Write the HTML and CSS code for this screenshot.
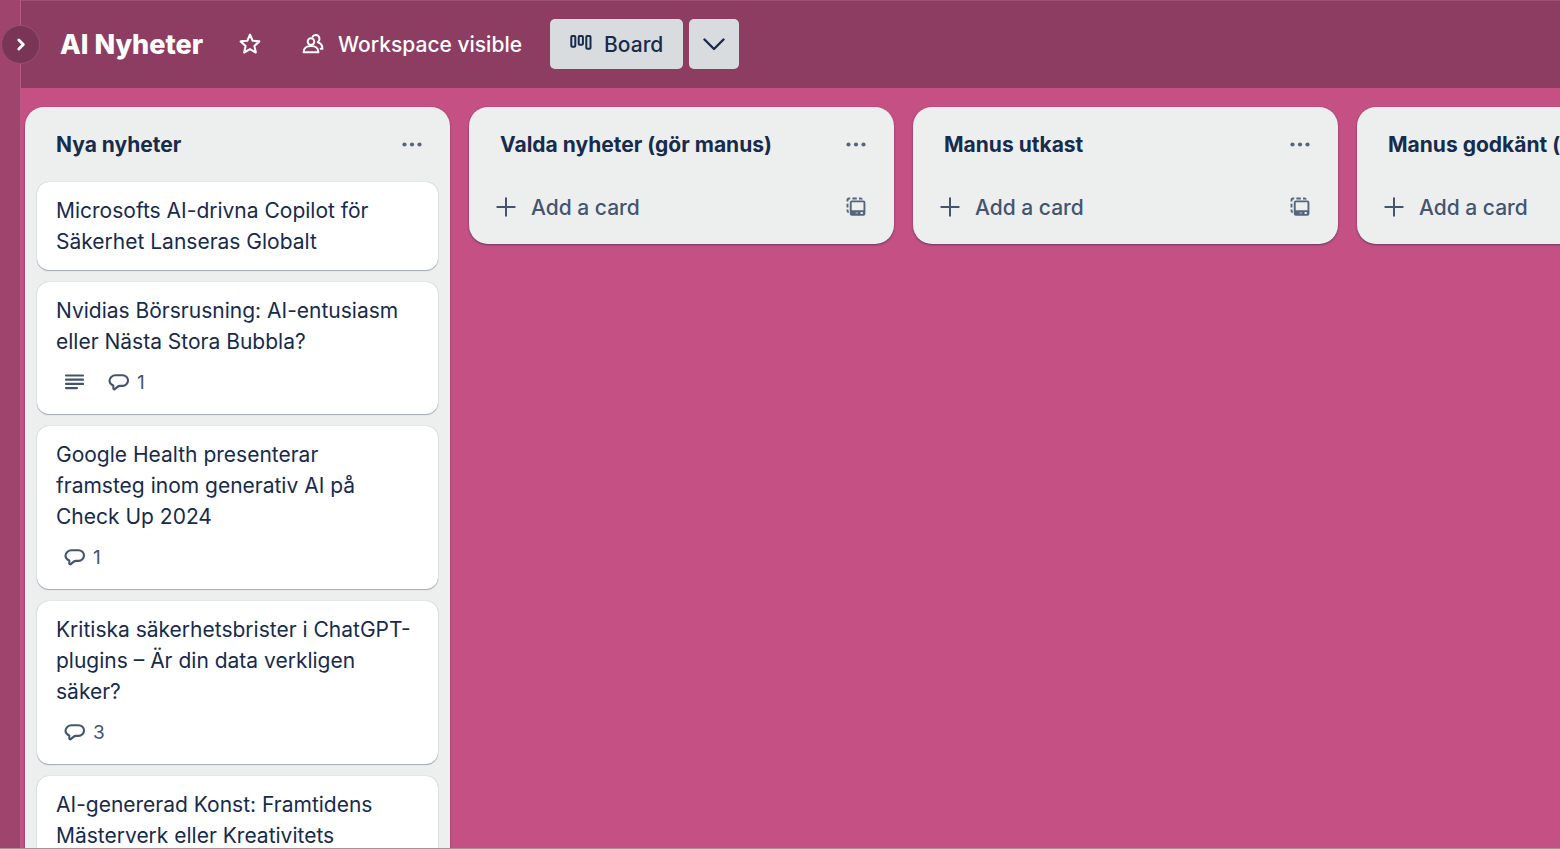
FILE: index.html
```html
<!DOCTYPE html>
<html lang="sv">
<head>
<meta charset="utf-8">
<meta name="viewport" content="width=device-width, initial-scale=1">
<title>AI Nyheter</title>
<link rel="stylesheet" href="styles.css">
</head>
<body>
<svg class="sprite" aria-hidden="true">
  <symbol id="dots" viewBox="0 0 20 20"><g fill="currentColor"><circle cx="2.5" cy="9.500" r="2.1"/><circle cx="10" cy="9.500" r="2.1"/><circle cx="17.5" cy="9.500" r="2.1"/></g></symbol>
  <symbol id="plus" viewBox="0 0 20 20"><path d="M10 1.3v17.4M1.3 10h17.4" fill="none" stroke="currentColor" stroke-width="2" stroke-linecap="round"/></symbol>
  <symbol id="template" viewBox="0 0 20 20"><path d="M1.500 4.600V2.800q0-1.300 1.300-1.300H4.200M6.400 1.500h4.400M13 1.500h1.600q1 0 1.400 1M1.500 6.800v3.600M1.500 12.600v1.200q0 1.200 1.200 1.600" fill="none" stroke="currentColor" stroke-width="1.900"/><path fill="currentColor" fill-rule="evenodd" d="M5.800 3.400h11.600a2 2 0 0 1 2 2v11.400a2 2 0 0 1-2 2H5.800a2 2 0 0 1-2-2V5.400a2 2 0 0 1 2-2zM5.700 5.300v7.900h11.800V5.300zM14.600 15v1.900h2.200V15z"/><path d="M9.600 15h2.400v1.900H9.600z" fill="#edefee" opacity=".35"/></symbol>
  <symbol id="comment" viewBox="0 0 22 20"><path d="M7.500 3.300h7a5.500 5.300 0 0 1 0 10.600h-2.700c-1.700 0-3.200 1.500-4.800 3.100-.7.700-1.700.4-1.700-.7v-2.800C2.800 12.500 1.500 11 1.500 8.800a6 5.500 0 0 1 6-5.500z" fill="none" stroke="currentColor" stroke-width="2.100" stroke-linejoin="round"/></symbol>
  <symbol id="lines" viewBox="0 0 20 20"><path d="M2 3.500h17M2 7.700h17M2 11.900h17M2 16.100h11" fill="none" stroke="currentColor" stroke-width="2.200" stroke-linecap="round"/></symbol>
</svg>
<div class="app">
  <aside class="sidebar">
    <button class="toggle" type="button" aria-label="Expand sidebar">
      <svg width="14" height="16" viewBox="0 0 14 16"><path d="M4.800 3 9.300 7.500l-4.500 4.500" fill="none" stroke="currentColor" stroke-width="2.900" stroke-linecap="round" stroke-linejoin="round"/></svg>
    </button>
  </aside>
  <div class="workspace">
    <header class="topbar">
      <h1 class="board-name">AI Nyheter</h1>
      <button class="star" type="button" aria-label="Star board">
        <svg width="24" height="24" viewBox="0 0 24 24"><path d="M12 2.700 14.700 8.700 21.300 9.400 16.400 13.900 17.800 20.500 12 17.200 6.200 20.500 7.600 13.900 2.700 9.400 9.300 8.700z" fill="none" stroke="currentColor" stroke-width="2.100" stroke-linejoin="round"/></svg>
      </button>
      <button class="visibility" type="button">
        <svg width="22" height="22" viewBox="0 0 22 22" fill="none" stroke="currentColor" stroke-width="2" stroke-linejoin="round" stroke-linecap="round"><circle cx="9" cy="8.600" r="3.300"/><path d="M1.600 19.200c0-3.800 3-6.300 7.400-6.300s7.400 2.500 7.400 6.300z"/><path d="M10.700 3.700c1-1.300 2.200-1.700 3.300-1.600 3.400.3 4.700 4.300 2.200 6.800M15.800 9.200c3 1 4.700 3.300 4.700 6.600h-1.800"/></svg>
        <span>Workspace visible</span>
      </button>
      <div class="views">
        <button class="view-button" type="button">
          <svg width="22" height="22" viewBox="0 0 22 22" fill="none" stroke="currentColor" stroke-width="2"><rect x="1.300" y="3" width="4" height="10.800" rx="1"/><rect x="8.700" y="3" width="4.200" height="8.800" rx="1"/><rect x="16.300" y="3" width="4.200" height="12.800" rx="1"/></svg>
          <span>Board</span>
        </button>
        <button class="view-more" type="button" aria-label="More views">
          <svg width="22" height="14" viewBox="0 0 22 14"><path d="M1.500 2.500 11 12 20.500 2.500" fill="none" stroke="currentColor" stroke-width="2.400" stroke-linecap="round" stroke-linejoin="round"/></svg>
        </button>
      </div>
    </header>
    <main class="board">
      <section class="list">
        <div class="list-head"><h2 class="list-title">Nya nyheter</h2><button class="icon-button" type="button" aria-label="List actions"><svg class="icon"><use href="#dots"/></svg></button></div>
        <ul class="cards">
          <li class="card"><a class="card-link" href="#c1">Microsofts AI-drivna Copilot för Säkerhet Lanseras Globalt</a></li>
          <li class="card"><a class="card-link" href="#c2">Nvidias Börsrusning: AI-entusiasm eller Nästa Stora Bubbla?</a>
            <div class="badges"><svg class="icon"><use href="#lines"/></svg><span class="badge"><svg class="icon-comment"><use href="#comment"/></svg>1</span></div></li>
          <li class="card"><a class="card-link" href="#c3">Google Health presenterar<br>framsteg inom generativ AI på<br>Check Up 2024</a>
            <div class="badges"><span class="badge"><svg class="icon-comment"><use href="#comment"/></svg>1</span></div></li>
          <li class="card"><a class="card-link" href="#c4">Kritiska säkerhetsbrister i ChatGPT-plugins – Är din data verkligen säker?</a>
            <div class="badges"><span class="badge"><svg class="icon-comment"><use href="#comment"/></svg>3</span></div></li>
          <li class="card"><a class="card-link" href="#c5">AI-genererad Konst: Framtidens Mästerverk eller Kreativitets</a></li>
        </ul>
      </section>
      <section class="list">
        <div class="list-head"><h2 class="list-title">Valda nyheter (gör manus)</h2><button class="icon-button" type="button" aria-label="List actions"><svg class="icon"><use href="#dots"/></svg></button></div>
        <div class="list-foot"><button class="add" type="button"><svg class="icon"><use href="#plus"/></svg>Add a card</button><button class="icon-button" type="button" aria-label="Create from template"><svg class="icon"><use href="#template"/></svg></button></div>
      </section>
      <section class="list">
        <div class="list-head"><h2 class="list-title">Manus utkast</h2><button class="icon-button" type="button" aria-label="List actions"><svg class="icon"><use href="#dots"/></svg></button></div>
        <div class="list-foot"><button class="add" type="button"><svg class="icon"><use href="#plus"/></svg>Add a card</button><button class="icon-button" type="button" aria-label="Create from template"><svg class="icon"><use href="#template"/></svg></button></div>
      </section>
      <section class="list">
        <div class="list-head"><h2 class="list-title">Manus godkänt (</h2><button class="icon-button" type="button" aria-label="List actions"><svg class="icon"><use href="#dots"/></svg></button></div>
        <div class="list-foot"><button class="add" type="button"><svg class="icon"><use href="#plus"/></svg>Add a card</button><button class="icon-button" type="button" aria-label="Create from template"><svg class="icon"><use href="#template"/></svg></button></div>
      </section>
    </main>
  </div>
</div>
</body>
</html>
```
FILE: styles.css
```css
* { box-sizing: border-box; }
body { margin: 0; font-family: Inter, "Liberation Sans", sans-serif; font-size: 21px; line-height: 31px; color: #172b4d; }
button { font: inherit; color: inherit; background: none; border: 0; padding: 0; display: flex; align-items: center; cursor: pointer; white-space: nowrap; }
h1, h2, ul { margin: 0; padding: 0; }
svg { flex: none; display: block; }
.sprite { position: absolute; width: 0; height: 0; }
.app { display: flex; height: 100vh; overflow: hidden; background: #c55083; border-bottom: 1px solid #999; }
.sidebar { position: relative; flex: none; width: 21px; background: #9f456d; border-right: 1px solid #b75b84; }
.toggle { position: absolute; z-index: 1; top: 25px; left: 1px; width: 39px; height: 39px; justify-content: center; border: 1px solid #935073; border-radius: 50%; background: #7a3556; color: #fff; }
.workspace { flex: 1; min-width: 0; display: flex; flex-direction: column; }
.topbar { flex: none; display: flex; align-items: center; height: 88px; padding: 0 0 1px 39px; background: #8e3d62; border-top: 1px solid #9c5173; color: #fff; }
.board-name { font-size: 27px; line-height: 37px; font-weight: 800; white-space: nowrap; }
.star { margin-left: 35px; }
.visibility { margin-left: 40px; gap: 14px; font-weight: 500; }
.views { display: flex; gap: 6px; margin-left: 28px; color: #172b4d; }
.view-button, .view-more { height: 50px; border-radius: 5px; background: #d8dcdf; }
.view-button { padding: 0 20px; gap: 12px; font-weight: 500; }
.view-more { width: 50px; justify-content: center; }
.board { flex: 1; min-height: 0; display: flex; align-items: flex-start; gap: 19px; padding: 19px 4px 0; overflow: hidden; }
.list { flex: none; width: 425px; padding: 0 12px 12px; border-radius: 19px; background: #edefee; box-shadow: 0 1px 2px rgba(9, 30, 66, .5); }
.list-head { display: flex; align-items: center; justify-content: space-between; height: 75px; padding: 0 16px 0 19px; }
.list-title { font-size: 21px; line-height: 31px; font-weight: 700; white-space: nowrap; }
.icon-button { color: #56657c; }
.icon { width: 20px; height: 20px; }
.list-foot { display: flex; align-items: center; justify-content: space-between; height: 50px; padding: 0 16px 0 15px; color: #44546f; }
.add { gap: 15px; font-weight: 500; }
.cards { display: flex; flex-direction: column; gap: 12px; list-style: none; }
.card { padding: 13px 19px; border-radius: 12px; background: #fff; box-shadow: 0 1px 1px rgba(9, 30, 66, .3), 0 0 1px rgba(9, 30, 66, .35); }
.card-link { display: block; color: inherit; text-decoration: none; }
.badges { display: flex; align-items: center; gap: 24px; height: 44px; padding: 6px 8px 0; font-size: 19px; line-height: 25px; color: #44546f; }
.badge { display: flex; align-items: center; gap: 7px; }
.icon-comment { width: 22px; height: 20px; }
```
